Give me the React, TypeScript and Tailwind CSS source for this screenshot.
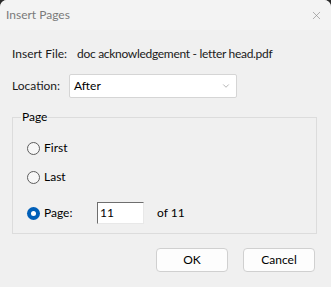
import { ChevronDown, X } from 'lucide-react'

const FONT = "font-['Segoe_UI','Lato',sans-serif]"

function Radio({ checked }: { checked?: boolean }) {
  return checked ? (
    <span className="flex h-[13px] w-[13px] shrink-0 items-center justify-center rounded-full bg-[#005fb8]">
      <span className="h-[5px] w-[5px] rounded-full bg-white" />
    </span>
  ) : (
    <span className="h-[13px] w-[13px] shrink-0 rounded-full border border-[#5d5d5d] bg-[#f7f7f7]" />
  )
}

export default function App() {
  return (
    <div className={`h-[287px] w-[331px] bg-[#2b2b2b] ${FONT} text-[12px] leading-[16px] text-[#1a1a1a]`}>
      <div className="flex h-full flex-col overflow-hidden rounded-t-[7px] bg-[#f0f0f0]">
        {/* title bar */}
        <div className="flex h-[30px] items-center justify-between bg-[#f3f3f3] pl-[6px] pr-[8px]">
          <span className="text-[#7a7a7a]">Insert Pages</span>
          <X className="h-[13px] w-[13px] text-[#8a8a8a]" strokeWidth={1.2} />
        </div>

        <div className="flex flex-col pl-[12px] pr-[15px]">
          <div className="mt-[16px] flex h-[16px] items-center whitespace-nowrap">
            <span className="w-[65px] shrink-0">Insert File:</span>
            <span className="tracking-[-0.3px]">doc acknowledgement - letter head.pdf</span>
          </div>

          <div className="mt-[12px] flex items-center">
            <span className="w-[57px] shrink-0">Location:</span>
            <div className="flex h-[24px] w-[168px] items-center justify-between rounded-[2px] border border-[#d5d5d5] bg-white pl-[4px] pr-[5px]">
              <span className="text-black">After</span>
              <ChevronDown className="h-[10px] w-[10px] text-[#777]" strokeWidth={1.3} />
            </div>
          </div>

          <fieldset className="mt-[11px] w-[305px] border border-[#dcdcdc] pb-[9px]">
            <legend className="ml-[8px] px-[1px] text-black">Page</legend>
            <div className="flex flex-col pl-[14px]">
              <div className="mt-[15px] flex h-[16px] items-center gap-[4px] text-black">
                <Radio />
                <span>First</span>
              </div>
              <div className="mt-[13px] flex h-[16px] items-center gap-[4px] text-black">
                <Radio />
                <span>Last</span>
              </div>
              <div className="mt-[17px] flex h-[22px] items-center text-black">
                <Radio checked />
                <span className="ml-[4px] w-[53px] shrink-0">Page:</span>
                <div className="flex h-[22px] w-[47px] items-center border border-t-[#6e6e6e] border-l-[#6e6e6e] border-r-[#e8e8e8] border-b-[#e8e8e8] bg-white pl-[2px]">
                  11
                </div>
                <span className="ml-[13px]">of 11</span>
              </div>
            </div>
          </fieldset>

          <div className="mt-[14px] flex justify-end gap-[15px] pr-[1px]">
            <button className="h-[24px] w-[72px] rounded-[4px] border border-[#d0d0d0] bg-[#fdfdfd] text-black">
              OK
            </button>
            <button className="h-[24px] w-[72px] rounded-[4px] border border-[#d0d0d0] bg-[#fdfdfd] text-black">
              Cancel
            </button>
          </div>
        </div>
      </div>
    </div>
  )
}
